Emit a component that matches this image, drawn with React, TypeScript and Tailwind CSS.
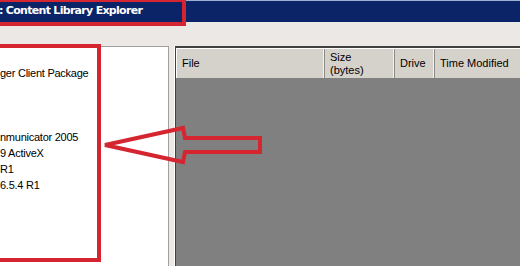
import React from "react";

// Content Library Explorer window, cropped, with red annotation marks on top.

const treeRows = [
  "ger Client Package",
  "",
  "",
  "",
  "nmunicator 2005",
  "9 ActiveX",
  "R1",
  "6.5.4 R1",
];

const columns = [
  { label: "File", width: "w-[148px]" },
  { label: "Size\n(bytes)", width: "w-[70px]" },
  { label: "Drive", width: "w-[40px]" },
];

const App = () => {
  return (
    <div className="relative w-[520px] h-[266px] overflow-hidden bg-[#ebe8e6] font-['Liberation_Sans',Arial,sans-serif] text-[11px] text-black">
      {/* Title bar */}
      <div className="h-[22px] border-t border-[#9fb0d0] bg-[#0b2468] flex items-center">
        <span className="ml-[-1px] text-[11px] font-bold text-white font-['DejaVu_Sans',Tahoma,sans-serif] tracking-[-0.7px]">
          : Content Library Explorer
        </span>
      </div>

      {/* Toolbar strip */}
      <div className="h-[24px]" />

      {/* Panels */}
      <div className="flex h-[220px]">
        {/* Tree */}
        <div className="w-[169px] bg-white border-t border-r border-[#a0a0a0] pt-[18px] tracking-[-0.25px]">
          {treeRows.map((row, i) => (
            <div key={i} className="h-[16px] leading-[16px] whitespace-nowrap">
              {row}
            </div>
          ))}
        </div>

        <div className="w-[6px] border-r border-white" />

        {/* File list */}
        <div className="flex-1 min-w-0 flex flex-col border-t-2 border-l border-[#404040] bg-[#808080]">
          <div className="flex h-[30px] bg-[#d5d1cb] border-t border-l border-white">
            {columns.map((col) => (
              <div
                key={col.label}
                className={`${col.width} shrink-0 h-full flex items-center pl-[5px] border-r border-[#8c8a86] shadow-[inset_-1px_0_0_#f4f2ef] whitespace-pre leading-[13px]`}
              >
                {col.label}
              </div>
            ))}
            <div className="flex-1 h-full flex items-center pl-[5px] whitespace-nowrap">
              Time Modified
            </div>
          </div>
        </div>
      </div>

      {/* Red annotation: title box */}
      <div className="absolute left-[-10px] top-[-2px] w-[196px] h-[28px] border-4 border-[#d42530]" />

      {/* Red annotation: tree box */}
      <div className="absolute left-[-10px] top-[44px] w-[111px] h-[218px] border-4 border-[#d42530]" />

      {/* Red annotation: arrow */}
      <svg className="absolute left-0 top-0" width="520" height="266" viewBox="0 0 520 266">
        <polygon
          points="105,145 183,128 185,138 260,138 260,152 185,152 183,162"
          fill="none"
          stroke="#d42530"
          strokeWidth="4"
          strokeLinejoin="miter"
        />
      </svg>
    </div>
  );
};

export default App;
